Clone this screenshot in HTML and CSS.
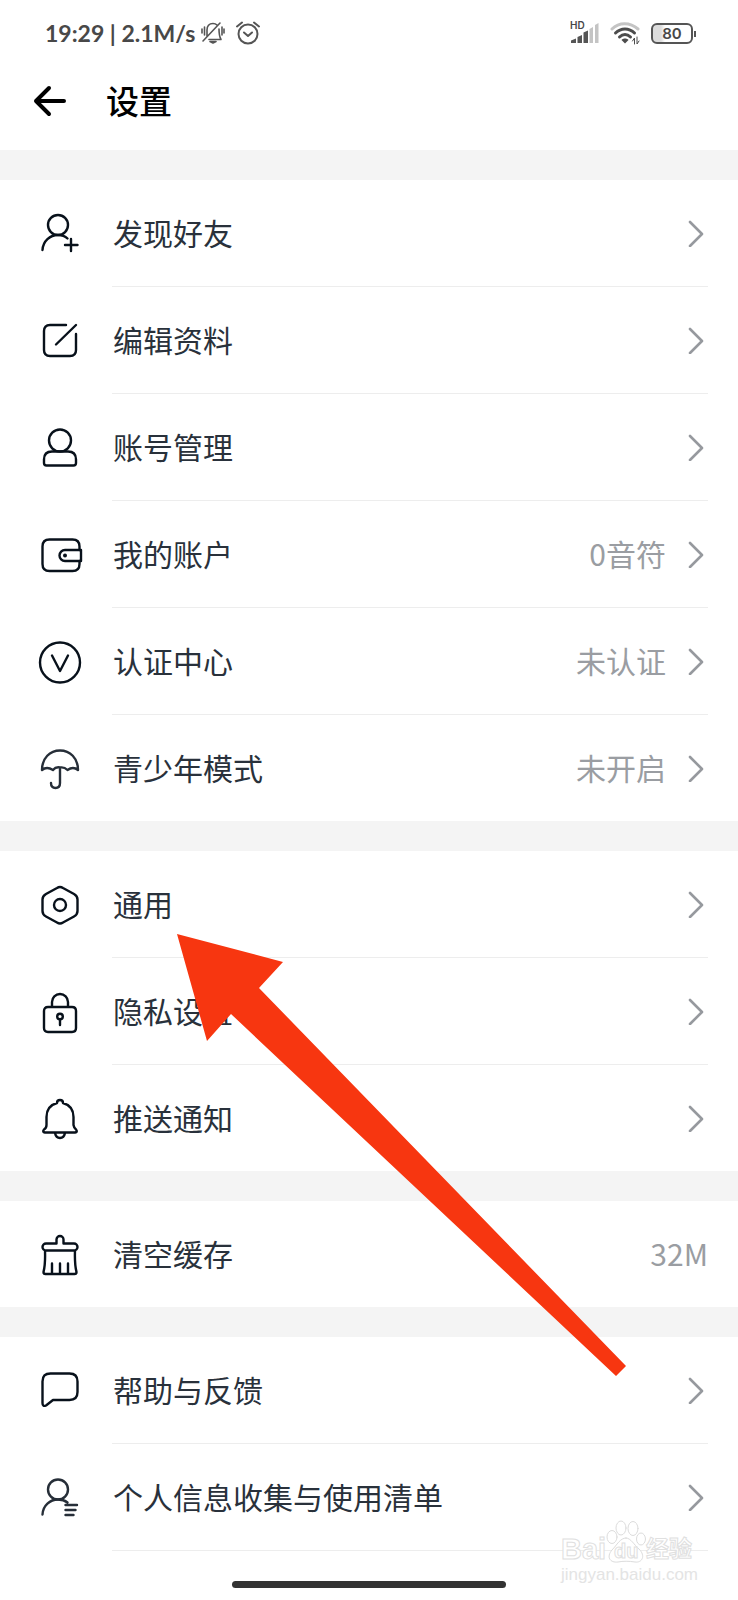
FILE: index.html
```html
<!DOCTYPE html>
<html lang="zh-CN">
<head>
  <meta charset="UTF-8">
  <meta name="viewport" content="width=device-width, initial-scale=1">
  <title>设置</title>
  <link rel="stylesheet" href="styles.css">
</head>
<body>
  <!-- shared chevron -->
  <svg class="defs" width="0" height="0" aria-hidden="true">
    <symbol id="chevron" viewBox="0 0 20 28">
      <path d="M2 3L14 15L2 27" />
    </symbol>
  </svg>

  <div class="page">
    <header>
      <div class="status-bar">
        <span class="status-text">19:29 | 2.1M/s</span>
        <svg class="status-icon mute" width="24" height="24" viewBox="0 0 24 24">
          <path d="M6 15V9C6 5 8 2.500 12 2.500C14 2.500 15 3 16 4M18 8C18 12 18 15 20 18.500H8M2 20L19 2M1 8V12M3.500 6V14M21 6V14M23 8V12" />
          <path d="M9 20.500H15L12 22Z" />
        </svg>
        <svg class="status-icon" width="24" height="24" viewBox="0 0 24 24">
          <circle cx="12" cy="13" r="9.500" />
          <path d="M8 11.500L12 15L16 11.500M1 5.500L6 1.500M18 1.500L23 5.500" />
        </svg>
        <div class="status-right">
          <div class="signal">
            <span class="hd">HD</span>
            <svg width="28" height="22" viewBox="0 0 28 22">
              <path class="dark" d="M0 21V18.500L5 16.500V21ZM6.500 21V15L11 13V21ZM12.500 21V10.500L17 8.500V21Z" />
              <path class="light" d="M18.500 21V7L22 5V21ZM24 21V3L27.500 1V21Z" />
            </svg>
          </div>
          <svg class="wifi" width="30" height="24" viewBox="0 0 30 24">
            <path class="far" d="M2 8C9 1 20 1 28 8" />
            <path d="M5.500 12C11 6.500 19 6.500 24.500 12M9.500 16C13 12.500 17 12.500 20.500 16" />
            <path class="dot" d="M11.500 19C13 17 17 17 18.500 19L15 22.500Z" />
            <path class="data" d="M22.500 20L24.500 17V23M27 16V23L29 20" />
          </svg>
          <div class="battery"><span>80</span></div>
        </div>
      </div>
      <div class="title-bar">
        <button class="back" type="button" aria-label="返回">
          <svg width="34" height="32" viewBox="0 0 34 32">
            <path d="M16 3L3 16L16 29M3 16H31" />
          </svg>
        </button>
        <h1>设置</h1>
      </div>
    </header>

    <main>
      <section class="group">
        <a class="row" href="#">
          <svg class="icon" viewBox="0 0 44 44">
            <circle cx="20" cy="13" r="10" />
            <path d="M4.500 38C5 29 12 23 20 23C24 23 27 24 29.500 26.500M33 27V39M27 33H39.500" />
          </svg>
          <span class="body"><span class="label">发现好友</span><svg class="chevron"><use href="#chevron" /></svg></span>
        </a>
        <a class="row" href="#">
          <svg class="icon" viewBox="0 0 44 44">
            <path d="M28 6H12Q6 6 6 12V31Q6 37 12 37H32Q38 37 38 31V15M38 6L18 25.500" />
          </svg>
          <span class="body"><span class="label">编辑资料</span><svg class="chevron"><use href="#chevron" /></svg></span>
        </a>
        <a class="row" href="#">
          <svg class="icon" viewBox="0 0 44 44">
            <circle cx="22" cy="14.500" r="11" />
            <path d="M14 25.500H30Q38 25.500 38 33.500V37Q38 39.500 35.500 39.500H8.500Q6 39.500 6 37V33.500Q6 25.500 14 25.500Z" />
          </svg>
          <span class="body"><span class="label">账号管理</span><svg class="chevron"><use href="#chevron" /></svg></span>
        </a>
        <a class="row" href="#">
          <svg class="icon" viewBox="0 0 44 44">
            <path d="M41.500 17V13.500Q41.500 6.500 34.500 6.500H11.500Q4.500 6.500 4.500 13.500V31Q4.500 38 11.500 38H34.500Q41.500 38 41.500 31V28" />
            <path d="M43 17H27A5.500 5.500 0 0 0 27 28H43Z" />
            <circle class="solid" cx="27" cy="22.500" r="2" />
          </svg>
          <span class="body"><span class="label">我的账户</span><span class="value">0音符</span><svg class="chevron"><use href="#chevron" /></svg></span>
        </a>
        <a class="row" href="#">
          <svg class="icon" viewBox="0 0 44 44">
            <circle cx="22" cy="22.500" r="20" />
            <path d="M14 15.500L22 31L30 15.500" />
          </svg>
          <span class="body"><span class="label">认证中心</span><span class="value">未认证</span><svg class="chevron"><use href="#chevron" /></svg></span>
        </a>
        <a class="row" href="#">
          <svg class="icon soft" viewBox="0 0 44 44">
            <path d="M4 24C4 12 12 4.500 22 4.500S40 12 40 24C37 21.500 33 21.500 29.500 24C27 21.500 24.500 21 22 21.500C19.500 21 17 21.500 15 24C11 21.500 7 21.500 4 24ZM22 22V37Q22 42 17.500 42Q13 42 13 37" />
          </svg>
          <span class="body"><span class="label">青少年模式</span><span class="value">未开启</span><svg class="chevron"><use href="#chevron" /></svg></span>
        </a>
      </section>

      <section class="group">
        <a class="row" href="#">
          <svg class="icon" viewBox="0 0 44 44">
            <path d="M19 5Q22 3 25 5L36 11Q39.500 13 39.500 16.500V28Q39.500 31.500 36 33.500L25 39.500Q22 41.500 19 39.500L8 33.500Q4.500 31.500 4.500 28V16.500Q4.500 13 8 11Z" />
            <circle cx="22" cy="22" r="6" />
          </svg>
          <span class="body"><span class="label">通用</span><svg class="chevron"><use href="#chevron" /></svg></span>
        </a>
        <a class="row" href="#">
          <svg class="icon" viewBox="0 0 44 44">
            <path d="M14 17V12A8 8 0 0 1 30 12V17M10 17H34Q38 17 38 21V38Q38 42 34 42H10Q6 42 6 38V21Q6 17 10 17ZM22 29.500V35" />
            <circle cx="22" cy="26.500" r="2.800" />
          </svg>
          <span class="body"><span class="label">隐私设置</span><svg class="chevron"><use href="#chevron" /></svg></span>
        </a>
        <a class="row" href="#">
          <svg class="icon" viewBox="0 0 44 44">
            <path d="M19 7Q19 4 22 4T25 7Q35.500 10 35.500 21V29Q36 32 38 33.500Q40 36 37 36.500H7Q4 36 6 33.500Q8.500 32 8.500 29V21Q8.500 10 19 7ZM17 37Q18 42 22 42T27 37" />
          </svg>
          <span class="body"><span class="label">推送通知</span><svg class="chevron"><use href="#chevron" /></svg></span>
        </a>
      </section>

      <section class="group">
        <a class="row" href="#">
          <svg class="icon" viewBox="0 0 44 44">
            <path d="M18.500 11.500V7.500A3.500 3.500 0 0 1 25.500 7.500V11.500H36A3.500 3.500 0 0 1 36 18.500H8A3.500 3.500 0 0 1 8 11.500ZM7 18.500Q7.500 32 5.500 40Q5.500 42 7.500 42H36.500Q38.500 42 38.500 40Q36.500 32 37 18.500M14 31.500V42M22 31.500V42M30 31.500V42" />
          </svg>
          <span class="body"><span class="label">清空缓存</span><span class="value">32M</span></span>
        </a>
      </section>

      <section class="group last">
        <a class="row" href="#">
          <svg class="icon" viewBox="0 0 44 44">
            <path d="M12.500 4.500H31.500Q39.500 4.500 39.500 12.500V23Q39.500 31 31.500 31H15L8 36.500Q4.500 38 4.500 34V12.500Q4.500 4.500 12.500 4.500Z" />
          </svg>
          <span class="body"><span class="label">帮助与反馈</span><svg class="chevron"><use href="#chevron" /></svg></span>
        </a>
        <a class="row" href="#">
          <svg class="icon soft" viewBox="0 0 44 44">
            <circle cx="20" cy="13.500" r="10" />
            <path d="M4.500 38.500C5 29.500 12 23.500 20 23.500C24 23.500 27 24.500 29.500 26.500M27.500 29H39M27.500 34H37.500M27.500 39H35.500" />
          </svg>
          <span class="body"><span class="label">个人信息收集与使用清单</span><svg class="chevron"><use href="#chevron" /></svg></span>
        </a>
      </section>
    </main>

    <div class="home-bar"></div>

    <!-- pointer over the 通用 row -->
    <svg class="pointer" width="450" height="443" viewBox="0 0 450 443">
      <path d="M0 0L106 28L82 54L449 432L439 442L54 80L30 107Z" />
    </svg>

    <div class="watermark">
      <div class="brand">
        <span class="outline">Bai</span>
        <span class="paw">
          <svg width="40" height="44" viewBox="0 0 40 44">
            <ellipse cx="6" cy="17" rx="5" ry="6.500" />
            <ellipse cx="15" cy="8" rx="5" ry="7" />
            <ellipse cx="27" cy="8.500" rx="5" ry="7" />
            <ellipse cx="35" cy="19" rx="4.500" ry="6" />
            <path d="M20 18C25 18 28 25 33 29C40 36 36 43 29 42C23 41 17 41 12 42C4 43 0 37 6 30C11 25 14 18 20 18Z" />
          </svg>
          <span class="outline du">du</span>
        </span>
        <span class="outline cn">经验</span>
      </div>
      <div class="site">jingyan.baidu.com</div>
    </div>
  </div>
</body>
</html>
```

FILE: styles.css
```css
* {
  box-sizing: border-box;
}
body {
  margin: 0;
  background: #fff;
  color: #29313b;
  font-family: "Noto Sans CJK SC", "Noto Sans", sans-serif;
}
svg {
  display: block;
  flex: none;
  fill: none;
  stroke-linecap: round;
  stroke-linejoin: round;
}
.defs {
  position: absolute;
}
.page {
  position: relative;
  overflow: hidden;
}

/* status bar */
.status-bar {
  display: flex;
  align-items: center;
  height: 66px;
  padding: 0 41px 0 45px;
  color: #484848;
}
.status-text {
  margin-right: 6px;
  font-family: Lato, sans-serif;
  font-size: 23px;
  font-weight: 700;
  line-height: 30px;
  white-space: nowrap;
}
.status-icon {
  stroke: #555;
  stroke-width: 2;
}
.mute {
  margin-right: 11px;
  stroke-width: 1.600;
}
.status-right {
  display: flex;
  align-items: center;
  gap: 11px;
  margin-left: auto;
}
.signal {
  position: relative;
}
.hd {
  position: absolute;
  top: -3px;
  left: -1px;
  font-family: Inter, sans-serif;
  font-size: 10px;
  font-weight: 600;
  line-height: 12px;
}
.signal .dark {
  fill: #555;
}
.signal .light {
  fill: #c4c4c4;
}
.wifi {
  stroke: #4c4c4c;
  stroke-width: 3;
}
.wifi .far {
  stroke: #c4c4c4;
}
.wifi .dot {
  fill: #4c4c4c;
  stroke: none;
}
.wifi .data {
  stroke-width: 1;
}
.battery {
  position: relative;
  width: 42px;
  height: 21px;
  margin-right: 4px;
  border: 2px solid #555;
  border-radius: 6px;
  background: linear-gradient(to right, #ddd 8px, #fff 12px);
  font-family: Inter, sans-serif;
  font-size: 15px;
  font-weight: 600;
  line-height: 17px;
  text-align: center;
}
.battery::after {
  content: "";
  position: absolute;
  top: 6px;
  right: -5px;
  width: 2px;
  height: 6px;
  background: #555;
}

/* title */
.title-bar {
  display: flex;
  align-items: center;
  gap: 39px;
  height: 84px;
  padding: 0 33px 14px;
}
.back {
  padding: 0;
  border: none;
  background: none;
  cursor: pointer;
}
.back svg {
  stroke: #000;
  stroke-width: 4;
}
h1 {
  margin: 0;
  padding-bottom: 2px;
  color: #000;
  font-size: 33px;
  font-weight: 500;
  line-height: 48px;
}

/* list */
.group {
  border-top: 30px solid #f4f4f4;
}
.row {
  display: flex;
  align-items: center;
  padding: 0 30px 0 38px;
  color: inherit;
  text-decoration: none;
}
.icon {
  width: 44px;
  height: 44px;
  margin-right: 30px;
  overflow: visible;
  stroke: #08111b;
  stroke-width: 2.400;
}
.icon.soft {
  stroke: #262e38;
}
.icon .solid {
  fill: #08111b;
  stroke: none;
}
.body {
  display: flex;
  flex: 1;
  align-items: center;
  height: 107px;
  padding-left: 1px;
  border-bottom: 1px solid #ededed;
}
.group:not(.last) .row:last-child .body {
  height: 106px;
  border-bottom: none;
}
.label,
.value {
  padding-bottom: 2px;
  font-size: 30px;
  line-height: 44px;
}
.label {
  flex: 1;
}
.value {
  color: #9a9da2;
}
.chevron {
  width: 20px;
  height: 28px;
  margin-left: 22px;
  stroke: #96999e;
  stroke-width: 2.600;
}

.home-bar {
  width: 37%;
  height: 7px;
  margin: 30px auto 12px;
  border-radius: 4px;
  background: #333;
}

.pointer {
  position: absolute;
  top: 934px;
  left: 177px;
  fill: #f73610;
  pointer-events: none;
}

/* watermark */
.watermark {
  position: absolute;
  right: 40px;
  bottom: 14px;
  color: #fff;
  font-family: "Liberation Sans", "Noto Sans CJK SC", sans-serif;
  pointer-events: none;
}
.brand {
  display: flex;
  align-items: flex-end;
  font-size: 29px;
  font-weight: 700;
  line-height: 30px;
}
.outline {
  -webkit-text-stroke: 1px #e0e0e0;
}
.paw {
  position: relative;
}
.paw svg {
  fill: #fff;
  stroke: #dcdcdc;
}
.du {
  position: absolute;
  bottom: 2px;
  left: 8px;
  font-size: 20px;
  line-height: 22px;
}
.cn {
  font-size: 23px;
}
.site {
  color: #e4e4e4;
  font-size: 17px;
  line-height: 22px;
}
```
